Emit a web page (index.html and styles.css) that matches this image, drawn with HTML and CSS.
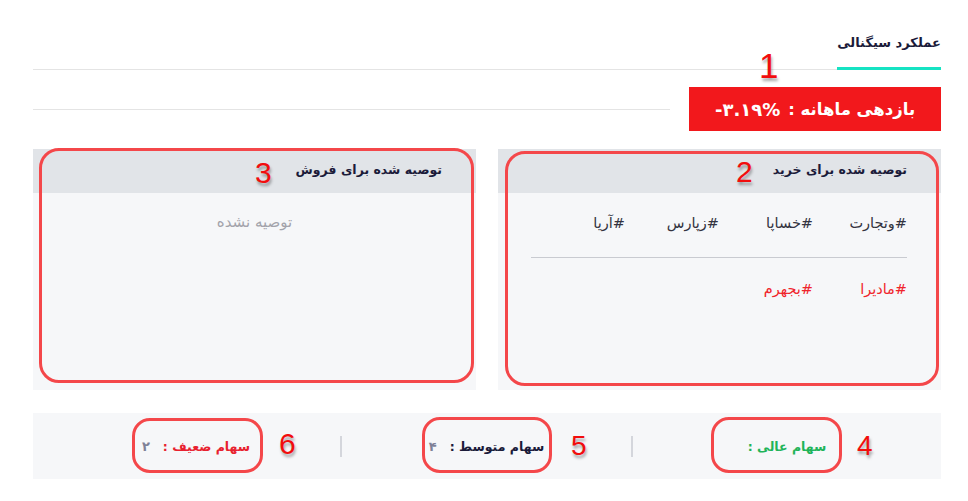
FILE: index.html
```html
<!DOCTYPE html>
<html lang="fa" dir="rtl">
<head>
<meta charset="utf-8">
<title>عملکرد سیگنالی</title>
<link rel="stylesheet" href="styles.css">
</head>
<body>
<div class="page">
  <div class="tabs">
    <div class="tab active">عملکرد سیگنالی</div>
  </div>

  <div class="return-row">
    <div class="return-box">بازدهی ماهانه : <bdi dir="ltr" class="value">-۳.۱۹%</bdi></div>
    <div class="return-line"></div>
  </div>

  <div class="panels">
    <section class="panel">
      <header class="panel-head">توصیه شده برای خرید</header>
      <div class="panel-body">
        <div class="tags">
          <span class="tag">#وتجارت</span>
          <span class="tag">#خساپا</span>
          <span class="tag">#زپارس</span>
          <span class="tag">#آریا</span>
        </div>
        <div class="tags-divider"></div>
        <div class="tags red">
          <span class="tag">#مادیرا</span>
          <span class="tag">#بجهرم</span>
        </div>
      </div>
    </section>
    <section class="panel">
      <header class="panel-head">توصیه شده برای فروش</header>
      <div class="panel-body center">
        <div class="empty">توصیه نشده</div>
      </div>
    </section>
  </div>

  <div class="summary">
    <div class="sum-item"><span class="sum-label green">سهام عالی :</span></div>
    <div class="sum-sep"></div>
    <div class="sum-item"><span class="sum-label navy">سهام متوسط :</span><span class="sum-count">۴</span></div>
    <div class="sum-sep"></div>
    <div class="sum-item"><span class="sum-label red">سهام ضعیف :</span><span class="sum-count">۲</span></div>
  </div>

  <div class="annot-box a-buy"></div>
  <div class="annot-box a-sell"></div>
  <div class="annot-box small a-4"></div>
  <div class="annot-box small a-5"></div>
  <div class="annot-box small a-6"></div>

  <div class="annot-num n1">1</div>
  <div class="annot-num n2">2</div>
  <div class="annot-num n3">3</div>
  <div class="annot-num n4">4</div>
  <div class="annot-num n5">5</div>
  <div class="annot-num n6">6</div>
</div>
</body>
</html>
```

FILE: styles.css
```css
* { box-sizing: border-box; }

html, body {
  margin: 0;
  padding: 0;
  background: #ffffff;
}

body {
  font-family: "DejaVu Sans", "Noto Sans", sans-serif;
  color: #1b1b3a;
}

.page {
  position: relative;
  width: 968px;
  height: 501px;
  padding: 0 27px 0 33px;
}

/* Tabs */
.tabs {
  display: flex;
  height: 70px;
  border-bottom: 1px solid #e4e4e4;
}

.tab {
  display: flex;
  align-items: center;
  justify-content: center;
  width: 104px;
  padding-top: 18px;
  font-size: 13px;
  font-weight: bold;
  color: #1b1b3a;
  letter-spacing: -0.3px;
  white-space: nowrap;
}

.tab.active {
  border-bottom: 3px solid #16e3c3;
  margin-bottom: -1px;
}

/* Monthly return */
.return-row {
  display: flex;
  align-items: center;
  margin-top: 17px;
  gap: 19px;
}

.return-box {
  flex: 0 0 252px;
  height: 44px;
  background: #f2181c;
  color: #ffffff;
  font-weight: bold;
  font-size: 16.5px;
  display: flex;
  align-items: center;
  justify-content: center;
  gap: 8px;
  letter-spacing: -0.2px;
  white-space: nowrap;
}

.return-box .value {
  font-size: 18px;
}

.return-line {
  flex: 1;
  height: 1px;
  background: #e4e4e4;
}

/* Panels */
.panels {
  display: flex;
  gap: 22px;
  margin-top: 18px;
}

.panel {
  flex: 1;
  height: 241px;
  background: #f6f7f9;
  display: flex;
  flex-direction: column;
}

.panel-head {
  height: 44px;
  flex: 0 0 44px;
  background: #e1e4e8;
  display: flex;
  align-items: center;
  padding: 0 34px 4px 0;
  font-size: 12.5px;
  font-weight: bold;
  color: #1b1b3a;
  letter-spacing: -0.3px;
}

.panel-body {
  flex: 1;
  padding: 22px 34px 0 0;
}

.panel-body.center {
  padding: 20px 0 0 0;
  display: flex;
  justify-content: center;
}

.empty {
  font-size: 15px;
  color: #a3a3ab;
  line-height: 18px;
}

.tags {
  display: grid;
  grid-template-columns: repeat(4, 94px);
  font-size: 14.5px;
  line-height: 16px;
  color: #333340;
}

.tags.red {
  color: #f0242b;
  margin-top: 23px;
}

.tag {
  white-space: nowrap;
}

.tags-divider {
  width: 376px;
  height: 1px;
  background: #c9cbd1;
  margin-top: 26px;
}

/* Summary bar */
.summary {
  display: grid;
  grid-template-columns: 308px 2px 289px 2px 1fr;
  align-items: center;
  height: 66px;
  margin-top: 23px;
  padding-left: 19px;
  background: #f6f7f9;
}

.sum-item {
  display: flex;
  justify-content: center;
  align-items: center;
  gap: 13px;
}

.sum-sep {
  width: 2px;
  height: 21px;
  background: #d4d6dc;
}

.sum-label {
  font-size: 12.5px;
  font-weight: bold;
  letter-spacing: -0.3px;
}

.sum-label.green { color: #1fb45a; }
.sum-label.navy { color: #1b1b3a; }
.sum-label.red { color: #e8212f; }

.sum-count {
  font-size: 13px;
  font-weight: bold;
  color: #7f8197;
}

/* Annotation overlays */
.annot-box {
  position: absolute;
  border: 3px solid #f4474a;
  border-radius: 20px;
  pointer-events: none;
}

.annot-box.small { border-radius: 18px; }

.a-buy  { left: 505px; top: 151px; width: 434px; height: 235px; }
.a-sell { left: 39px;  top: 148px; width: 435px; height: 235px; }
.a-4    { left: 711px; top: 417px; width: 131px; height: 56px; }
.a-5    { left: 422px; top: 417px; width: 130px; height: 56px; }
.a-6    { left: 132px; top: 418px; width: 131px; height: 55px; }

.annot-num {
  position: absolute;
  font-family: "Liberation Sans", Arial, sans-serif;
  font-size: 30px;
  line-height: 1;
  color: #f20d0d;
  text-shadow: 1px 3px 3px rgba(0, 0, 0, 0.35);
  direction: ltr;
}

.n1 { left: 759px; top: 48px; font-size: 35px; }
.n2 { left: 736px; top: 157px; }
.n3 { left: 255px; top: 158px; }
.n4 { left: 857px; top: 432px; font-size: 28px; }
.n5 { left: 571px; top: 432px; font-size: 28px; }
.n6 { left: 279px; top: 429px; }
```
